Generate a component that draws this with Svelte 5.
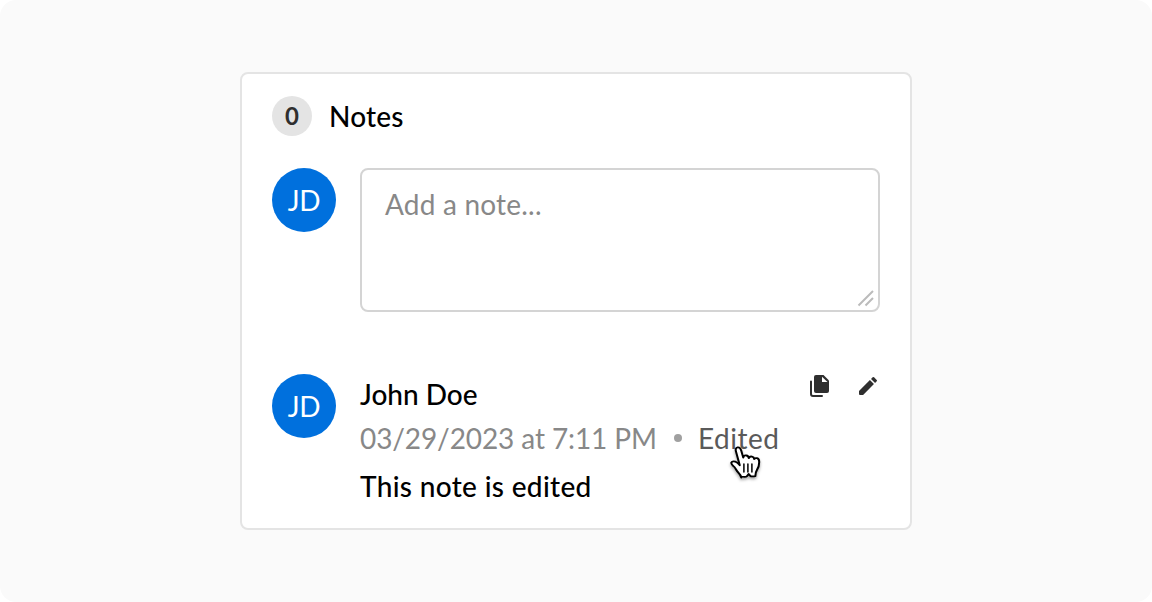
<script>
  const initials = 'JD';
</script>

<main>
  <section class="card">
    <header><span class="count">0</span><h2>Notes</h2></header>

    <div class="composer">
      <div class="avatar"><span>{initials}</span></div>
      <div class="field">
        <span class="placeholder">Add a note...</span>
        <svg class="grip" width="18" height="18" viewBox="0 0 18 18"><path d="M1.500 16.500 16 2M8.500 16.500 16 9" /></svg>
      </div>
    </div>

    <article>
      <div class="avatar"><span>{initials}</span></div>
      <div class="body">
        <div class="top">
          <span class="name">John Doe</span>
          <div class="actions">
            <svg width="24" height="24" viewBox="0 0 24 24"><path fill="#2f2f2f" d="M8 1h7.500L21 6.500V17a2 2 0 0 1-2 2H8a2 2 0 0 1-2-2V3a2 2 0 0 1 2-2z" /><path fill="#fff" d="M14 2.800V8h5.500z" /><path fill="none" stroke="#2f2f2f" stroke-width="2" stroke-linecap="round" stroke-linejoin="round" d="M3 7.500V20a2 2 0 0 0 2 2h9" /></svg>
            <svg width="24" height="24" viewBox="0 0 24 24"><path fill="#2f2f2f" d="M3 16.900V20a1 1 0 0 0 1 1h3.100L17.960 10.090l-4.050-4.050zM20.710 7.340a1 1 0 0 0 0-1.410l-2.640-2.640a1 1 0 0 0-1.410 0l-1.630 1.630 4.050 4.050z" /></svg>
          </div>
        </div>
        <div class="meta">
          <span class="date">03/29/2023 at 7:11 PM</span>
          <i class="dot"></i>
          <span class="edited">Edited
            <svg class="cursor" width="36" height="40" viewBox="0 0 36 40"><path fill="#fff" stroke="#000" stroke-width="1.800" stroke-linejoin="round" d="M14 33.500c-.3-2-1.500-3.600-3-5.400-1.300-1.600-2-3.700-3.300-5.300-1-1.300-3-2.500-2.500-4.200.6-1.900 3.300-1.400 4.700-.2 1 .8 1.900 1.900 2.700 2.900L9.300 7.600C8.700 5.500 9.100 3.700 10.700 3.400c1.700-.3 2.700 1.200 3.200 3.100l1.800 7.100c.3-1.700 1.400-2.300 2.700-2.100 1.400.2 2 1.200 2.200 2.700.5-1.400 1.500-1.900 2.800-1.600 1.300.3 1.900 1.200 2 2.500.6-1 1.500-1.200 2.500-.9 1.700.5 2 2.300 1.900 4.200 0 3-.7 5.200-1.900 7.300-1 1.800-1.500 3.400-1.500 6.500-2.500.5-3.900.5-4.700-.6l-1.200-1.700-1.600 2.300c-.8 1.200-2.700.9-4.900.3z" transform="translate(-2.500 0) scale(1.130 1)" /><path fill="none" stroke="#000" stroke-width="1.500" stroke-linecap="round" d="M15.900 20v8M19.900 20v8M23.900 20v8" /></svg>
          </span>
        </div>
        <p>This note is edited</p>
      </div>
    </article>
  </section>
</main>

<style>
  :global(body) { margin: 0; background: #fff; }
  main { box-sizing: border-box; width: 1152px; height: 602px; padding-top: 72px; background: #fafafa; border-radius: 16px; font: 28px/36px Lato, 'Noto Sans', sans-serif; color: #000; white-space: nowrap; }
  .card { box-sizing: border-box; width: 672px; height: 458px; margin: 0 auto; padding: 22px 30px; background: #fff; border: 2px solid #e4e4e4; border-radius: 8px; }
  header { display: flex; align-items: center; height: 40px; gap: 17px; }
  h2 { margin: 0; font: inherit; font-weight: 500; letter-spacing: .2px; }
  .count { width: 40px; height: 40px; line-height: 40px; border-radius: 50%; background: #e4e4e4; color: #2f2f2f; text-align: center; font-size: 24px; font-weight: 700; }
  .composer { display: flex; gap: 24px; margin-top: 32px; }
  .avatar { flex: none; width: 64px; height: 64px; line-height: 64px; border-radius: 50%; background: #0070dd; color: #fff; text-align: center; letter-spacing: -.3px; }
  .field { position: relative; box-sizing: border-box; width: 520px; height: 144px; padding: 16px 23px; border: 2px solid #d4d4d4; border-radius: 8px; color: #888; letter-spacing: .2px; }
  .grip { position: absolute; right: 3px; bottom: 3px; fill: none; stroke: #bbb; stroke-width: 2; }
  article { display: flex; gap: 24px; margin-top: 62px; }
  .body { flex: 1; }
  .top { display: flex; justify-content: space-between; height: 42px; }
  .name { padding-top: 2px; font-weight: 500; }
  .actions { display: flex; gap: 24px; }
  .meta { display: flex; align-items: center; height: 44px; color: #888; }
  .date { letter-spacing: -.1px; }
  .dot { width: 8px; height: 8px; margin: 0 16px 0 17px; border-radius: 50%; background: #a0a0a0; }
  .edited { position: relative; color: #5a5a5a; letter-spacing: .5px; }
  .cursor { position: absolute; left: 30px; top: 24px; filter: drop-shadow(0 2px 1.500px rgba(0, 0, 0, .35)); }
  p { margin: 8px 0 0; font-weight: 500; letter-spacing: .33px; }
</style>
